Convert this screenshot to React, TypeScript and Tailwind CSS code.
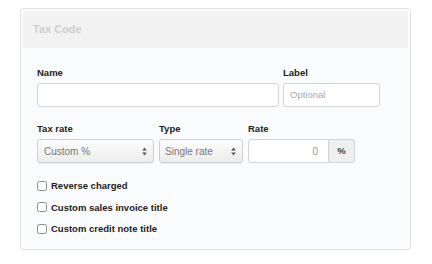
import React from "react";

const Arrows = () => (
  <svg width="5" height="9" viewBox="0 0 5 9" className="shrink-0">
    <path d="M2.5 0.5 L4.8 3.6 L0.2 3.6 Z" fill="#555" />
    <path d="M2.5 8.5 L4.8 5.4 L0.2 5.4 Z" fill="#555" />
  </svg>
);

const Check = ({ label }: { label: string }) => (
  <div className="flex items-center h-[21.5px]">
    <div className="w-[10px] h-[10px] rounded-[2.5px] border border-[#8a8a8a] bg-white shrink-0" />
    <span className="ml-[4px] text-[9.5px] font-bold text-[#222] leading-none">{label}</span>
  </div>
);

export default function App() {
  return (
    <div
      className="w-[432px] h-[264px] bg-white pt-[8px] pl-[20px]"
      style={{ fontFamily: '"Liberation Sans", Arial, sans-serif' }}
    >
      <div className="w-[391px] h-[242px] border border-[#e2e2e2] rounded-[3px] bg-[#fafbfc] p-[2px] flex flex-col">
        <div className="h-[37px] bg-[#f2f2f2] flex items-center pl-[10px]">
          <span className="text-[11px] font-bold text-[#cfcfcf]">Tax Code</span>
        </div>
        <div className="pl-[14px] pt-[19px] flex flex-col">
          <div className="flex gap-[4px]">
            <div className="flex flex-col w-[242px]">
              <div className="h-[11px] text-[9.5px] font-bold text-[#222] leading-[11px]">Name</div>
              <div className="mt-[5px] h-[24px] border border-[#d4d4d4] rounded-[3px] bg-white" />
            </div>
            <div className="flex flex-col w-[97px]">
              <div className="h-[11px] text-[9.5px] font-bold text-[#222] leading-[11px]">Label</div>
              <div className="mt-[5px] h-[24px] border border-[#d4d4d4] rounded-[3px] bg-white flex items-center pl-[6px] text-[9.5px] text-[#aaa]">
                Optional
              </div>
            </div>
          </div>
          <div className="flex gap-[5px] mt-[16px]">
            <div className="flex flex-col w-[117px]">
              <div className="h-[11px] text-[9.5px] font-bold text-[#222] leading-[11px]">Tax rate</div>
              <div className="mt-[5px] h-[24px] border border-[#d0d0d0] rounded-[3px] bg-gradient-to-b from-[#fdfdfd] to-[#ececec] shadow-[0_1px_1px_rgba(0,0,0,0.06)] flex items-center justify-between pl-[6px] pr-[6px] text-[10px] text-[#777]">
                <span>Custom %</span>
                <Arrows />
              </div>
            </div>
            <div className="flex flex-col w-[84px]">
              <div className="h-[11px] text-[9.5px] font-bold text-[#222] leading-[11px]">Type</div>
              <div className="mt-[5px] h-[24px] border border-[#d0d0d0] rounded-[3px] bg-gradient-to-b from-[#fdfdfd] to-[#ececec] shadow-[0_1px_1px_rgba(0,0,0,0.06)] flex items-center justify-between pl-[5px] pr-[6px] text-[10px] text-[#777]">
                <span>Single rate</span>
                <Arrows />
              </div>
            </div>
            <div className="flex flex-col w-[107px]">
              <div className="h-[11px] text-[9.5px] font-bold text-[#222] leading-[11px]">Rate</div>
              <div className="mt-[5px] h-[24px] flex">
                <div className="w-[81px] border border-[#d4d4d4] rounded-l-[3px] bg-white flex items-center justify-end pr-[10px] text-[10px] text-[#999]">
                  0
                </div>
                <div className="w-[26px] border border-l-0 border-[#d4d4d4] rounded-r-[3px] bg-[#efefef] flex items-center justify-center text-[9.5px] font-bold text-[#444]">
                  %
                </div>
              </div>
            </div>
          </div>
          <div className="mt-[12px] flex flex-col">
            <Check label="Reverse charged" />
            <Check label="Custom sales invoice title" />
            <Check label="Custom credit note title" />
          </div>
        </div>
      </div>
    </div>
  );
}
